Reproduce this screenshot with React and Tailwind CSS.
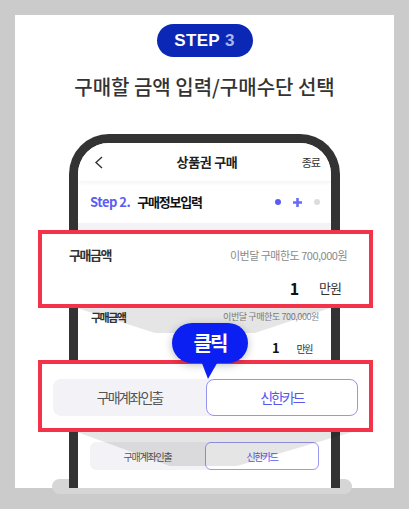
export default function App() {
  return (
    <div className="w-[409px] h-[509px] bg-[#cbcbcb] pt-[15px] px-[15px] overflow-hidden font-['Noto_Sans_CJK_KR',sans-serif]">
      {/* Card */}
      <div className="relative w-[379px] h-[473px] bg-white flex flex-col items-center">
        {/* Step pill */}
        <div className="mt-[9px] h-[33px] w-[96px] rounded-full bg-[#0a27b6] flex items-center justify-center font-['Liberation_Sans',sans-serif] font-bold text-[17px] tracking-[0.3px]">
          <span className="text-white">STEP</span>
          <span className="text-[#aab6ee] ml-[5px]">3</span>
        </div>

        {/* Title */}
        <h1 className="mt-[18px] h-[24px] leading-[24px] text-[20px] font-medium text-[#333] tracking-[0px]">
          구매할 금액 입력/구매수단 선택
        </h1>

        {/* Phone */}
        <div className="relative z-10 mt-[35px] flex-1 min-h-0 w-[271px] border-[9px] border-b-0 border-[#333] rounded-t-[40px] bg-white overflow-hidden flex flex-col">
          {/* Header */}
          <div className="relative z-10 h-[38px] shrink-0 grid grid-cols-[1fr_auto_1fr] items-center pl-[16px] pr-[11px] bg-white shadow-[0_2px_4px_rgba(0,0,0,0.05)]">
            <svg width="10" height="13" viewBox="0 0 10 13" fill="none">
              <path d="M8 1 L2 6.5 L8 12" stroke="#333" strokeWidth="1.4" />
            </svg>
            <span className="text-[13px] font-bold text-[#222] tracking-[-0.3px]">상품권 구매</span>
            <span className="justify-self-end text-[11px] text-[#333] tracking-[-1px]">종료</span>
          </div>

          {/* Step row */}
          <div className="h-[42px] shrink-0 flex items-center pl-[12px] pr-[11px]">
            <span className="text-[13px] font-bold text-[#5c5cf5] tracking-[-0.5px]">Step 2.</span>
            <span className="ml-[7px] text-[13px] font-bold text-[#111] tracking-[-1.2px]">구매정보입력</span>
            <div className="ml-auto flex items-center gap-[11px]">
              <span className="w-[6px] h-[6px] rounded-full bg-[#5c5cf5]" />
              <svg width="11" height="11" viewBox="0 0 11 11">
                <path d="M5.5 1 V10 M1 5.5 H10" stroke="#6a6af5" strokeWidth="2.6" />
              </svg>
              <span className="w-[6px] h-[6px] rounded-full bg-[#dcdcdc]" />
            </div>
          </div>

          <div className="h-[10px] shrink-0 bg-[#f3f3f7]" />

          {/* Amount section (small) */}
          <div className="pt-[76px] px-[12px] pl-[13px]">
            <div className="h-[16px] flex items-center justify-between">
              <span className="text-[11px] font-bold text-[#333] tracking-[-1.5px]">구매금액</span>
              <span className="text-[9px] text-[#888] tracking-[-0.4px]">이번달 구매한도 700,000원</span>
            </div>
            <div className="mt-[14px] h-[18px] flex items-center justify-end gap-[17px] pr-[7px]">
              <span className="text-[13px] font-bold text-[#111]">1</span>
              <span className="text-[10px] text-[#333] tracking-[-1.5px]">만원</span>
            </div>
          </div>

          {/* Payment method (small) */}
          <div className="mt-[85px] mx-[12px] h-[28px] shrink-0 flex rounded-[6px] bg-[#f3f3f7]">
            <div className="flex-1 flex items-center justify-center text-[10px] text-[#555] tracking-[-1.2px]">구매계좌인출</div>
            <div className="w-[114px] flex items-center justify-center rounded-[6px] border border-[#9a9af2] bg-white text-[10px] text-[#5a5af0] tracking-[-1.5px]">신한카드</div>
          </div>
        </div>

        {/* Phone base */}
        <div className="absolute left-[37px] top-[464px] w-[300px] h-[15px] rounded-full bg-[#d6d6d6]" />

        {/* Zoom shading */}
        <svg className="absolute left-0 top-0 z-[15] pointer-events-none" width="379" height="473">
          <polygon points="62,293 315,293 240,318 140,318" fill="rgba(0,0,0,0.1)" />
          <polygon points="62,417 337,417 222,451 155,451" fill="rgba(0,0,0,0.1)" />
        </svg>

        {/* Callout 1: amount */}
        <div className="absolute z-20 left-[23px] top-[215px] w-[335px] h-[78px] border-[4px] border-[#f2334a] bg-white flex flex-col">
          <div className="mt-[11px] h-[20px] flex items-center justify-between pl-[27px] pr-[22px]">
            <span className="text-[13px] font-bold text-[#333] tracking-[-1.5px]">구매금액</span>
            <span className="text-[11px] text-[#8a8a8a] tracking-[-0.5px]">이번달 구매한도 700,000원</span>
          </div>
          <div className="mt-[13px] h-[20px] flex items-center justify-end gap-[20px] pr-[28px]">
            <span className="text-[16px] font-bold text-[#111]">1</span>
            <span className="text-[13px] text-[#333] tracking-[-1px]">만원</span>
          </div>
        </div>

        {/* Callout 2: payment method */}
        <div className="absolute z-20 left-[23px] top-[345px] w-[335px] h-[72px] border-[4px] border-[#f2334a] bg-white px-[11px] pt-[15px]">
          <div className="h-[37px] flex rounded-[8px] bg-[#f3f3f7]">
            <div className="flex-1 flex items-center justify-center text-[14px] text-[#555] tracking-[-2px]">구매계좌인출</div>
            <div className="w-[152px] flex items-center justify-center rounded-[8px] border border-[#9696f2] bg-white text-[14px] text-[#5656f2] tracking-[-2px]">신한카드</div>
          </div>
        </div>

        {/* Click bubble */}
        <div className="absolute z-30 left-[157px] top-[308px] w-[76px] h-[40px] rounded-full bg-[#0b1ff2] shadow-[0_2px_8px_rgba(0,0,0,0.25)] flex items-center justify-center text-white text-[20px] font-bold tracking-[-2px]">
          클릭
        </div>
        <svg className="absolute z-30 left-[184px] top-[343px]" width="22" height="22" viewBox="0 0 22 22">
          <polygon points="1,0 21,0 9,21" fill="#0b1ff2" />
        </svg>
      </div>
    </div>
  )
}
